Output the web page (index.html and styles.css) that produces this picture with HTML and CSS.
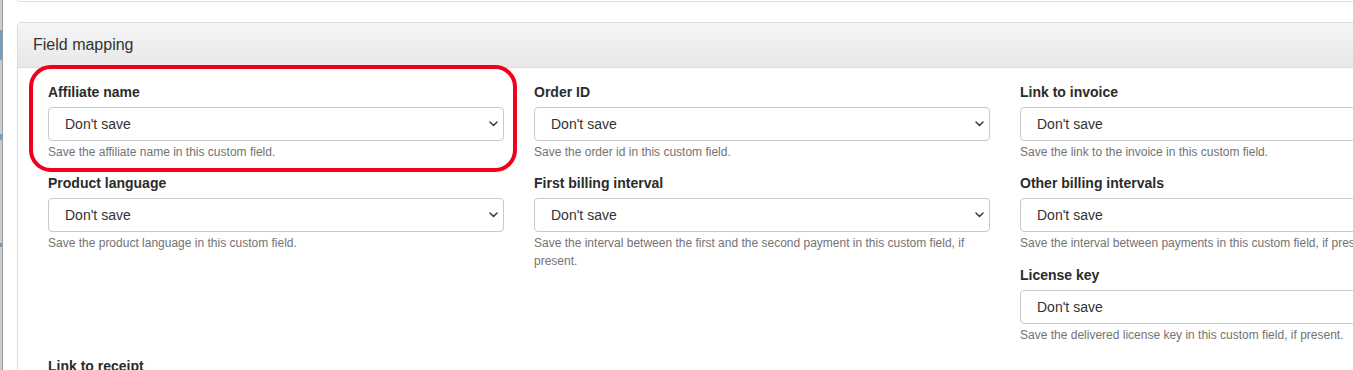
FILE: index.html
```html
<!DOCTYPE html>
<html lang="en">
<head>
    <meta charset="UTF-8">
    <meta name="viewport" content="width=device-width, initial-scale=1.0">
    <title>Field mapping</title>
    <link rel="stylesheet" href="styles.css">
</head>
<body>
    <div class="screen">
        <div class="edge"></div>

        <div class="content">
            <div class="panel panel-end"></div>

            <div class="panel">
                <div class="panel-heading">Field mapping</div>
                <div class="panel-body">
                    <div class="fields">
                        <div class="field">
                            <label>Affiliate name</label>
                            <div class="select-wrap">
                                <select><option>Don't save</option></select>
                                <svg class="chevron" width="9" height="6" viewBox="0 0 9 6"><path d="M1 1 L4.5 4.5 L8 1"/></svg>
                            </div>
                            <p class="help">Save the affiliate name in this custom field.</p>
                        </div>
                        <div class="field">
                            <label>Order ID</label>
                            <div class="select-wrap">
                                <select><option>Don't save</option></select>
                                <svg class="chevron" width="9" height="6" viewBox="0 0 9 6"><path d="M1 1 L4.5 4.5 L8 1"/></svg>
                            </div>
                            <p class="help">Save the order id in this custom field.</p>
                        </div>
                        <div class="field">
                            <label>Link to invoice</label>
                            <div class="select-wrap">
                                <select><option>Don't save</option></select>
                                <svg class="chevron" width="9" height="6" viewBox="0 0 9 6"><path d="M1 1 L4.5 4.5 L8 1"/></svg>
                            </div>
                            <p class="help">Save the link to the invoice in this custom field.</p>
                        </div>
                        <div class="field">
                            <label>Product language</label>
                            <div class="select-wrap">
                                <select><option>Don't save</option></select>
                                <svg class="chevron" width="9" height="6" viewBox="0 0 9 6"><path d="M1 1 L4.5 4.5 L8 1"/></svg>
                            </div>
                            <p class="help">Save the product language in this custom field.</p>
                        </div>
                        <div class="field field-tall">
                            <label>First billing interval</label>
                            <div class="select-wrap">
                                <select><option>Don't save</option></select>
                                <svg class="chevron" width="9" height="6" viewBox="0 0 9 6"><path d="M1 1 L4.5 4.5 L8 1"/></svg>
                            </div>
                            <p class="help">Save the interval between the first and the second payment in this custom field, if present.</p>
                        </div>
                        <div class="field">
                            <label>Other billing intervals</label>
                            <div class="select-wrap">
                                <select><option>Don't save</option></select>
                                <svg class="chevron" width="9" height="6" viewBox="0 0 9 6"><path d="M1 1 L4.5 4.5 L8 1"/></svg>
                            </div>
                            <p class="help">Save the interval between payments in this custom field, if present.</p>
                        </div>
                        <div class="field field-last-col">
                            <label>License key</label>
                            <div class="select-wrap">
                                <select><option>Don't save</option></select>
                                <svg class="chevron" width="9" height="6" viewBox="0 0 9 6"><path d="M1 1 L4.5 4.5 L8 1"/></svg>
                            </div>
                            <p class="help">Save the delivered license key in this custom field, if present.</p>
                        </div>
                        <div class="field">
                            <label>Link to receipt</label>
                            <div class="select-wrap">
                                <select><option>Don't save</option></select>
                                <svg class="chevron" width="9" height="6" viewBox="0 0 9 6"><path d="M1 1 L4.5 4.5 L8 1"/></svg>
                            </div>
                            <p class="help">Save the link to the receipt in this custom field.</p>
                        </div>
                    </div>

                    <!-- red marker drawn over the first field -->
                    <div class="highlight"></div>
                </div>
            </div>
        </div>
    </div>
</body>
</html>
```

FILE: styles.css
```css
html, body {
    margin: 0;
    padding: 0;
    overflow: hidden;
    background-color: #fff;
}
body {
    font-family: "Liberation Sans", Arial, sans-serif;
    color: #333;
}
.screen {
    display: flex;
    min-height: 370px;
}
.edge {
    width: 2px;
    flex-shrink: 0;
    border-right: 1px solid #9a9a9a;
    background: linear-gradient(to bottom, #cdcdcd 0, #cdcdcd 30px, #6f9fc4 30px, #6f9fc4 60px, #cdcdcd 60px, #cdcdcd 134px, #6f9fc4 134px, #6f9fc4 140px, #cdcdcd 140px, #cdcdcd 243px, #6f9fc4 243px, #6f9fc4 247px, #cdcdcd 247px);
}
.content {
    padding-left: 14px;
}
.panel {
    width: 1500px;
    border: 1px solid #dcdcdc;
    border-radius: 4px;
    margin-bottom: 20px;
    background-color: #fff;
}
.panel-end {
    height: 1px;
    border-top: 0;
    border-radius: 0 0 4px 4px;
}
.panel-heading {
    padding: 10px 15px;
    font-size: 16px;
    line-height: 24px;
    color: #333;
    background: linear-gradient(to bottom, #f5f5f5 0, #e8e8e8 100%);
    border-bottom: 1px solid #dcdcdc;
    border-radius: 3px 3px 0 0;
}
.panel-body {
    position: relative;
    padding: 14px 15px 15px;
}
.fields {
    display: grid;
    grid-template-columns: 486px 486px 485px;
    align-items: start;
}
.field {
    padding: 0 15px;
}
.field-tall {
    grid-row: span 2;
}
.field-last-col {
    grid-column: 3;
    margin-top: 1px;
}
.field label {
    display: block;
    font-size: 14px;
    font-weight: bold;
    line-height: 20px;
    margin-bottom: 5px;
    color: #2b2b2b;
}
.select-wrap {
    position: relative;
}
.select-wrap select {
    display: block;
    width: 100%;
    height: 34px;
    margin: 0;
    padding: 0 30px 0 16px;
    font-family: "Liberation Sans", Arial, sans-serif;
    font-size: 14px;
    color: #333;
    background-color: #fff;
    border: 1px solid #c9c9c9;
    border-radius: 4px;
    -webkit-appearance: none;
    appearance: none;
}
.chevron {
    position: absolute;
    right: 6px;
    top: 14px;
    fill: none;
    stroke: #3a3a3a;
    stroke-width: 1.5;
    stroke-linecap: round;
    stroke-linejoin: round;
}
.help {
    margin: 2px 0 12px;
    font-size: 12px;
    line-height: 18px;
    color: #737373;
}
.highlight {
    position: absolute;
    left: 11px;
    top: -3px;
    width: 488px;
    height: 107px;
    box-sizing: border-box;
    border: 4px solid #f0001c;
    border-radius: 22px;
}
```
